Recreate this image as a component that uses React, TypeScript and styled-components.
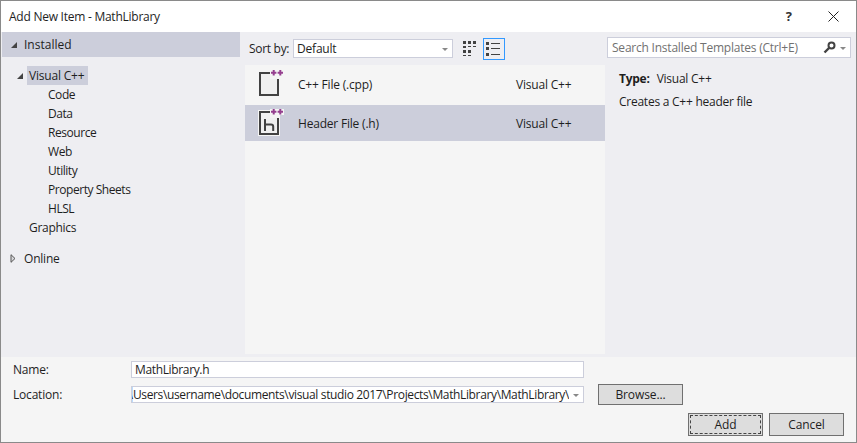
import React from "react";
import styled, { createGlobalStyle } from "styled-components";

const Global = createGlobalStyle`
  html, body { margin: 0; padding: 0; background: #eeeef2; }
  body { font-family: "Open Sans", "Noto Sans", "Liberation Sans", sans-serif; font-size: 12px; color: #1e1e1e; }
`;

const Dialog = styled.div`
  width: 857px; height: 443px; box-sizing: border-box;
  border: 1px solid #8a8a8a; background: #eeeef2;
  display: flex; flex-direction: column; overflow: hidden;
`;
const TitleBar = styled.div`
  height: 31px; flex: none; background: #fff; display: flex; align-items: center;
  padding: 0 17px 0 8px; justify-content: space-between;
`;
const Title = styled.div`font-size: 12px; letter-spacing: -0.25px;`;
const WinButtons = styled.div`display: flex; align-items: center; gap: 36px;`;
const Help = styled.span`font-size: 13px; font-weight: 700; color: #333; line-height: 1;`;
const Main = styled.div`
  flex: 1; min-height: 0; display: grid; grid-template-columns: 244px 360px 1fr;
`;
const Left = styled.div`padding: 0 0 0 1px; display: flex; flex-direction: column;`;
const RootRow = styled.div<{ $on?: boolean }>`
  height: 25px; width: 238px; display: flex; align-items: center; gap: 6px; padding-left: 8px; box-sizing: border-box;
  background: ${(p) => (p.$on ? "#cccedb" : "transparent")};
`;
const Tree = styled.div`padding: 9px 0 0 14px; display: flex; flex-direction: column;`;
const NodeRow = styled.div`height: 19px; display: flex; align-items: center; gap: 3px;`;
const NodeLabel = styled.span<{ $on?: boolean }>`
  height: 19px; line-height: 19px; padding: 0 4px 0 2px; background: ${(p) => (p.$on ? "#cccedb" : "transparent")}; letter-spacing: -0.2px;
`;
const Child = styled.div`height: 19px; line-height: 19px; padding-left: 32px; letter-spacing: -0.45px;`;
const Top = styled.div`padding-left: 13px; height: 19px; line-height: 19px; letter-spacing: -0.3px;`;
const OnlineRow = styled(RootRow)`margin-top: 12px; gap: 8px; height: 19px; letter-spacing: -0.2px;`;
const Mid = styled.div`display: flex; flex-direction: column;`;
const Toolbar = styled.div`
  height: 33px; flex: none; display: flex; align-items: center; padding: 0 0 0 4px; box-sizing: border-box;
`;
const SortLabel = styled.span`width: 44px; letter-spacing: -0.3px; flex: none;`;
const SelectBox = styled.div`
  width: 160px; height: 19px; box-sizing: border-box; background: #fff; border: 1px solid #cccedb;
  display: flex; align-items: center; justify-content: space-between; padding: 0 4px 0 3px; letter-spacing: -0.2px;
`;
const Caret = styled.span`
  width: 0; height: 0; border-left: 3.5px solid transparent; border-right: 3.5px solid transparent;
  border-top: 3.5px solid #888; margin-top: 2px; flex: none;
`;
const ViewBtn = styled.div<{ $on?: boolean }>`
  width: 22px; height: 22px; box-sizing: border-box; display: flex; align-items: center; justify-content: center;
  border: 1px solid ${(p) => (p.$on ? "#3399ff" : "transparent")}; flex: none;
`;
const ViewGroup = styled.div`display: flex; gap: 1px; margin-left: 7px;`;
const List = styled.div`flex: 1; background: #f5f5f5; margin-bottom: 3px; padding-top: 1px; display: flex; flex-direction: column; gap: 3px;`;
const Item = styled.div<{ $on?: boolean }>`
  height: 36px; flex: none; display: flex; align-items: center; background: ${(p) => (p.$on ? "#cccedb" : "transparent")};
`;
const Ico = styled.div`width: 53px; flex: none; display: flex; padding-left: 13px; box-sizing: border-box;`;
const ItemName = styled.span`width: 218px; flex: none; letter-spacing: -0.2px;`;
const ItemLang = styled.span`letter-spacing: -0.2px;`;
const Right = styled.div`display: flex; flex-direction: column; padding: 5px 5px 0 2px;`;
const Search = styled.div`
  height: 21px; box-sizing: border-box; border: 1px solid #cccedb; background: #fff; display: flex; align-items: center;
  justify-content: space-between; padding: 0 4px 0 4px; color: #717171; letter-spacing: -0.22px;
`;
const SearchIcons = styled.div`display: flex; align-items: center; gap: 4px;`;
const Info = styled.div`padding: 13px 0 0 12px; display: flex; flex-direction: column; gap: 7px;`;
const InfoLine = styled.div`height: 16px; line-height: 16px; letter-spacing: -0.25px;`;
const InfoBold = styled.b`font-weight: 700; margin-right: 7px;`;
const Bottom = styled.div`
  height: 85px; flex: none; background: #f5f5f5; box-sizing: border-box; padding: 4px 12px 0 12px;
  display: flex; flex-direction: column;
`;
const FormRow = styled.div`display: flex; align-items: center; height: 17px;`;
const LocRow = styled(FormRow)`margin-top: 8px;`;
const FieldLabel = styled.span`width: 118px; flex: none; letter-spacing: -0.2px;`;
const Input = styled.div`
  width: 453px; height: 17px; box-sizing: border-box; border: 1px solid #cccedb; background: #fff; flex: none;
  line-height: 15px; padding-left: 3px; letter-spacing: -0.35px; overflow: hidden;
`;
const Combo = styled(Input)`display: flex; align-items: center; padding: 0 4px 0 0; gap: 4px; letter-spacing: -0.36px;`;
const Clip = styled.div`flex: 1; min-width: 0; overflow: hidden; display: flex; justify-content: flex-end; white-space: nowrap;`;
const Sel = styled.span`background: #b8dcff;`;
const Btn = styled.div<{ $focus?: boolean }>`
  height: 23px; width: 75px; box-sizing: border-box; background: #dddddd; border: 1px solid #707070; flex: none;
  display: flex; align-items: center; justify-content: center; letter-spacing: -0.1px;
  outline: ${(p) => (p.$focus ? "1px dashed #444" : "none")}; outline-offset: -3px;
`;
const BrowseBtn = styled(Btn)`width: 85px; height: 21px; margin-left: 14px;`;
const Actions = styled.div`display: flex; justify-content: flex-end; gap: 6px; margin-top: 10px;`;

const Tri = ({ open }: { open: boolean }) =>
  open ? (
    <svg width="8" height="8" viewBox="0 0 8 8"><path d="M7 1v6H1z" fill="#444" /></svg>
  ) : (
    <svg width="6" height="9" viewBox="0 0 6 9"><path d="M1 .7 5 4.5 1 8.3z" fill="#d8d8dc" stroke="#555" /></svg>
  );

const FileIcon = ({ h }: { h?: boolean }) => (
  <svg width="26" height="28" viewBox="0 0 26 28">
    {h && <path d="M0 1H12V0H26V6H22V27H0z" fill="#f5f5f5" />}
    <path d="M2 3H12V9H20V25H2z" fill="#f0f0f0" />
    <path d="M12 3H2V25H20V9" fill="none" stroke="#424242" strokeWidth="2" />
    {h && <path d="M7 10V22M7 15.5H13C14.5 15.5 15.2 16.3 15.2 17.5V22" fill="none" stroke="#424242" strokeWidth="2" />}
    <path d="M13 2.7H18.4M15.7 0V5.4M19.6 2.7H25M22.3 0V5.4" fill="none" stroke="#953f8f" strokeWidth="2" />
  </svg>
);

const GridIcon = () => (
  <svg width="16" height="16" viewBox="0 0 16 16" fill="#424242">
    <path d="M0 0h3v3H0zM5 0h3v3H5zM10 0h3v3h-3zM0 5h3v2H0zM5 5h3v1H5zM10 5h3v1h-3zM0 9h3v3H0zM5 9h3v3H5zM0 14h3v1H0zM5 14h3v1H5z" />
  </svg>
);
const ListIcon = () => (
  <svg width="16" height="16" viewBox="0 0 16 16" fill="#424242">
    <path d="M0 1h3v3H0zM0 6h3v3H0zM0 12h3v3H0zM5 2h9v1H5zM5 7h9v1H5zM5 13h9v1H5z" />
  </svg>
);
const SearchGlyph = () => (
  <svg width="13" height="13" viewBox="0 0 13 13">
    <circle cx="8.5" cy="4.5" r="3" fill="none" stroke="#424242" strokeWidth="2" />
    <path d="M6 7 1.5 11.5" stroke="#424242" strokeWidth="2.4" />
  </svg>
);

const children = ["Code", "Data", "Resource", "Web", "Utility", "Property Sheets", "HLSL"];

export default function App() {
  return (
    <Dialog>
      <Global />
      <TitleBar>
        <Title>Add New Item - MathLibrary</Title>
        <WinButtons>
          <Help>?</Help>
          <svg width="11" height="11" viewBox="0 0 11 11"><path d="M.5.5l10 10M10.5.5l-10 10" stroke="#222" fill="none" /></svg>
        </WinButtons>
      </TitleBar>
      <Main>
        <Left>
          <RootRow $on><Tri open /><span>Installed</span></RootRow>
          <Tree>
            <NodeRow><Tri open /><NodeLabel $on>Visual C++</NodeLabel></NodeRow>
            {children.map((c) => <Child key={c}>{c}</Child>)}
            <Top>Graphics</Top>
          </Tree>
          <OnlineRow><Tri open={false} /><span>Online</span></OnlineRow>
        </Left>
        <Mid>
          <Toolbar>
            <SortLabel>Sort by:</SortLabel>
            <SelectBox><span>Default</span><Caret /></SelectBox>
            <ViewGroup>
              <ViewBtn><GridIcon /></ViewBtn>
              <ViewBtn $on><ListIcon /></ViewBtn>
            </ViewGroup>
          </Toolbar>
          <List>
            <Item><Ico><FileIcon /></Ico><ItemName>C++ File (.cpp)</ItemName><ItemLang>Visual C++</ItemLang></Item>
            <Item $on><Ico><FileIcon h /></Ico><ItemName>Header File (.h)</ItemName><ItemLang>Visual C++</ItemLang></Item>
          </List>
        </Mid>
        <Right>
          <Search>
            <span>Search Installed Templates (Ctrl+E)</span>
            <SearchIcons><SearchGlyph /><Caret /></SearchIcons>
          </Search>
          <Info>
            <InfoLine><InfoBold>Type:</InfoBold>Visual C++</InfoLine>
            <InfoLine>Creates a C++ header file</InfoLine>
          </Info>
        </Right>
      </Main>
      <Bottom>
        <FormRow><FieldLabel>Name:</FieldLabel><Input>MathLibrary.h</Input></FormRow>
        <LocRow>
          <FieldLabel>Location:</FieldLabel>
          <Combo>
            <Clip><Sel>C:\</Sel>Users\username\documents\visual studio 2017\Projects\MathLibrary\MathLibrary\</Clip>
            <Caret />
          </Combo>
          <BrowseBtn>Browse...</BrowseBtn>
        </LocRow>
        <Actions>
          <Btn $focus>Add</Btn>
          <Btn>Cancel</Btn>
        </Actions>
      </Bottom>
    </Dialog>
  );
}
